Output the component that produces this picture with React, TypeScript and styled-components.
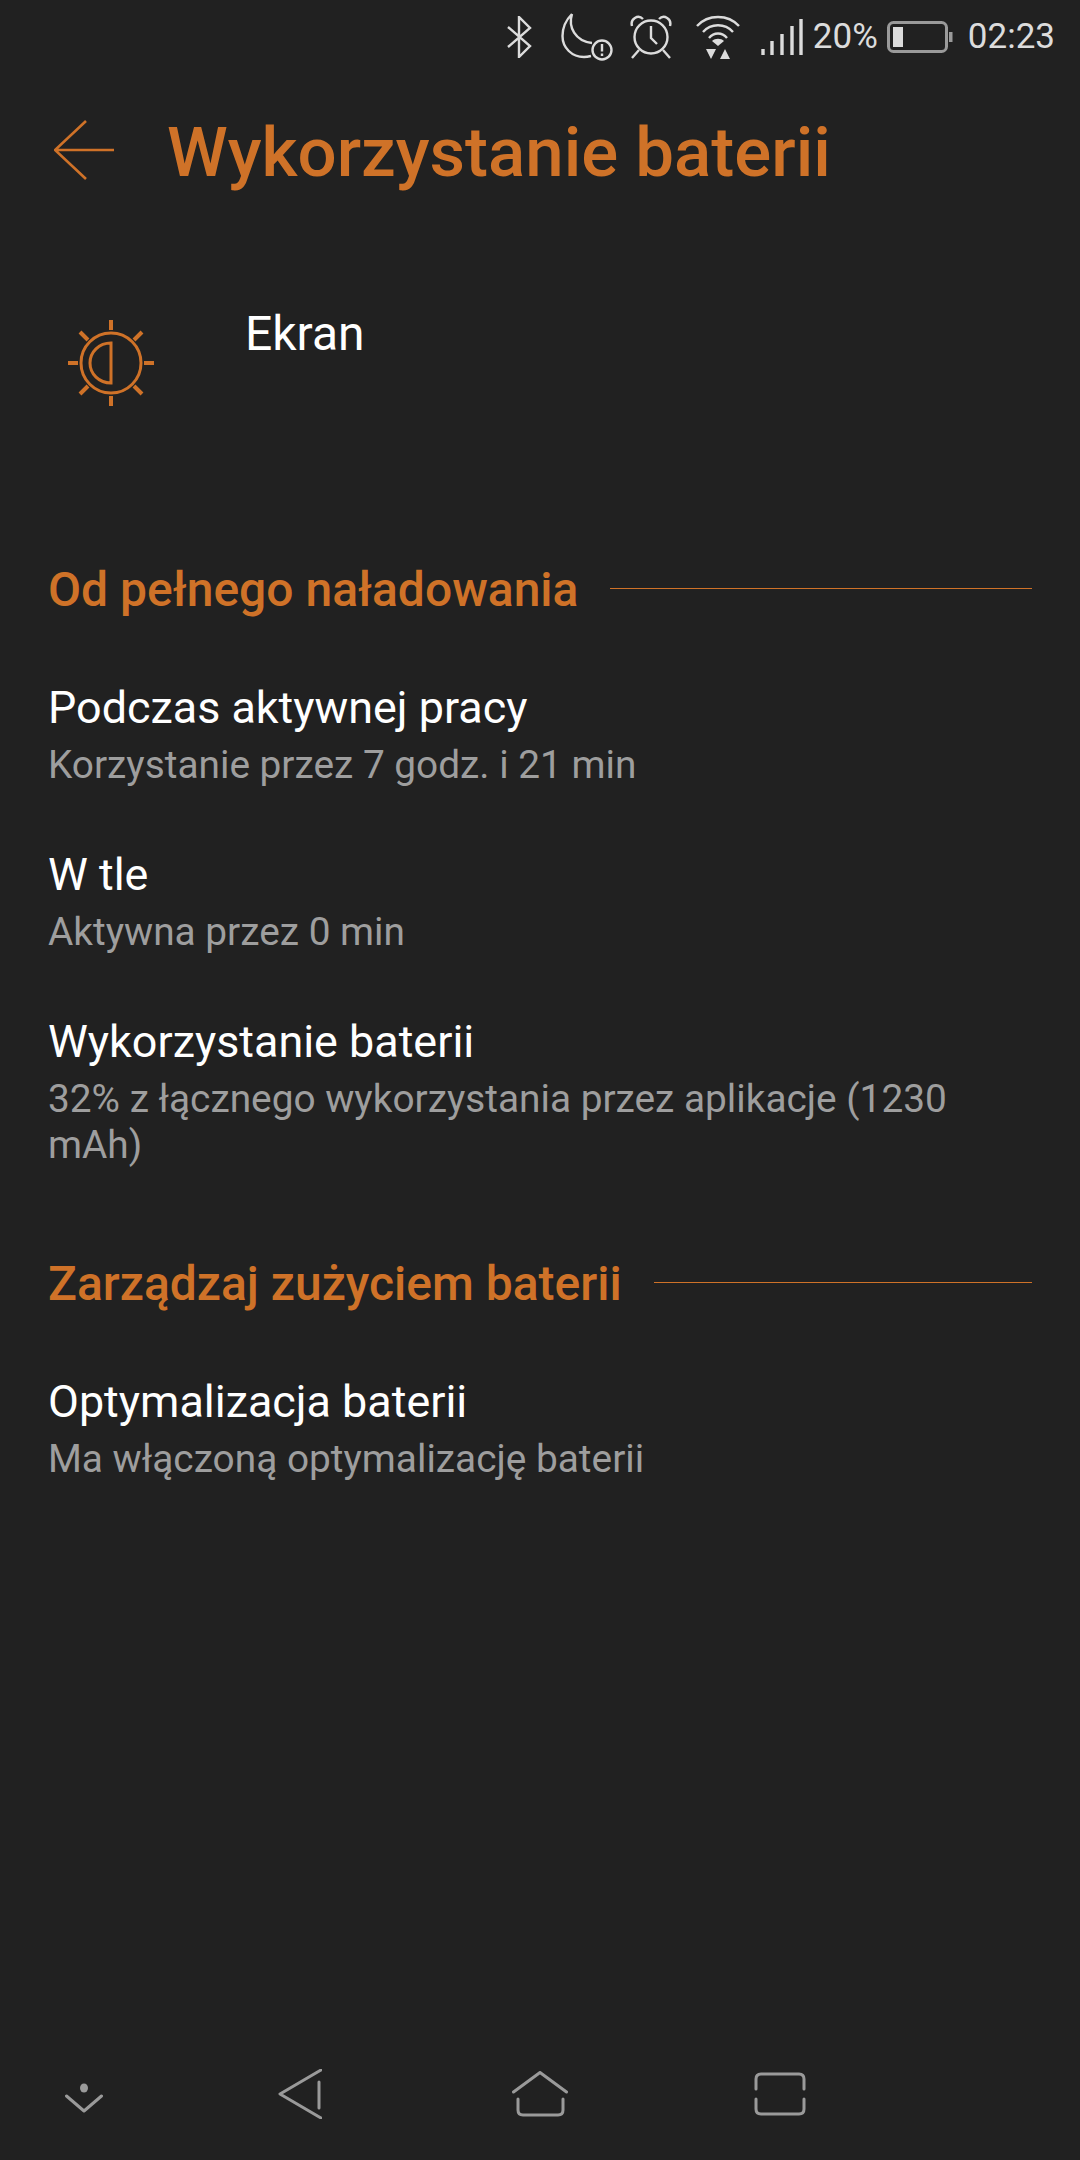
import styled, { createGlobalStyle } from 'styled-components'

const accent = '#cf7228'
const iconGray = '#9a9a9a'
const statusGray = '#dcdcdc'

const GlobalStyle = createGlobalStyle`
  html, body {
    margin: 0;
    padding: 0;
    background: #212121;
  }
`

const Page = styled.div`
  width: 1080px;
  height: 2160px;
  display: flex;
  flex-direction: column;
  background: #212121;
  font-family: Roboto, 'Noto Sans', sans-serif;
  overflow: hidden;
`

const StatusBar = styled.div`
  height: 74px;
  display: flex;
  align-items: center;
  justify-content: flex-end;
  padding-right: 25px;
  color: ${statusGray};
  font-size: 35px;
`

const StatusIcon = styled.svg<{ $left: number }>`
  display: block;
  flex: none;
  margin-left: ${(p) => p.$left}px;
  fill: none;
  stroke: ${statusGray};
  stroke-width: 2.4;
`

const StatusText = styled.span<{ $left: number }>`
  margin-left: ${(p) => p.$left}px;
  line-height: 40px;
`

const Header = styled.div`
  height: 152px;
  display: flex;
  align-items: center;
  padding-left: 54px;
`

const BackIcon = styled.svg`
  display: block;
  flex: none;
  stroke: ${accent};
  stroke-width: 2.6;
  fill: none;
`

const Title = styled.h1`
  margin: 4px 0 0 53px;
  font-size: 69px;
  font-weight: 500;
  color: ${accent};
`

const AppRow = styled.div`
  height: 192px;
  display: flex;
  align-items: flex-start;
  padding-left: 67px;
`

const AppName = styled.div`
  margin: 79px 0 0 90px;
  font-size: 48px;
  color: #fff;
`

const SunIcon = styled.svg`
  display: block;
  flex: none;
  margin-top: 93px;
  stroke: ${accent};
  fill: none;
`

const Section = styled.section`
  display: flex;
  flex-direction: column;
  padding: 0 48px;
`

const SectionHead = styled.div<{ $top: number }>`
  display: flex;
  align-items: center;
  gap: 32px;
  margin-top: ${(p) => p.$top}px;
  margin-bottom: 31px;
  height: 60px;
`

const SectionTitle = styled.h2`
  margin: 2px 0 0;
  font-size: 48px;
  font-weight: 500;
  color: ${accent};
  white-space: nowrap;
`

const SectionRule = styled.div`
  flex: 1;
  height: 1px;
  background: ${accent};
`

const Item = styled.div`
  display: flex;
  flex-direction: column;
  padding-top: 30px;
  padding-bottom: 28px;
`

const ItemTitle = styled.div`
  font-size: 44.9px;
  line-height: 58px;
  color: #fff;
`

const ItemSub = styled.div`
  font-size: 38.8px;
  line-height: 46px;
  margin-top: 5px;
  color: #9e9e9e;
`

const NavBar = styled.nav`
  margin-top: auto;
  height: 91px;
  display: flex;
  align-items: flex-start;
  padding-left: 65px;
`

const NavIcon = styled.svg<{ $left?: number; $top?: number }>`
  display: block;
  flex: none;
  margin-left: ${(p) => p.$left ?? 0}px;
  margin-top: ${(p) => p.$top ?? 0}px;
  stroke: ${iconGray};
  stroke-width: 3;
  stroke-linecap: round;
  stroke-linejoin: round;
  fill: none;
`

export default function App() {
  return (
    <Page>
      <GlobalStyle />
      <StatusBar>
        <StatusIcon $left={0} width="26" height="42" viewBox="0 0 26 42">
          <path d="M2 11 L24 30 L13 41 V1 L24 12 L2 31" />
        </StatusIcon>
        <StatusIcon $left={29} width="52" height="48" viewBox="0 0 52 48">
          <path d="M11 1 C4 8 1.5 15 1.5 23 C1.5 35 11 44 23 44 C26 44 28 43.5 30 43 M11 1 C7 14 14 28 31 30" />
          <circle cx="41" cy="37" r="9.5" />
          <path d="M41 31 V38.5 M41 40.5 V43" />
        </StatusIcon>
        <StatusIcon $left={17} width="42" height="44" viewBox="0 0 42 44">
          <circle cx="21" cy="22" r="16.5" />
          <path d="M21 11 V23 L27 29 M2 11 C0 4 8 -1 13 4 M40 11 C42 4 34 -1 29 4 M9 35 L2 43 M33 35 L40 43" />
        </StatusIcon>
        <StatusIcon $left={24} width="44" height="44" viewBox="0 0 44 44">
          <path d="M1 11 C12 -1 32 -1 43 11 M7 17 C15 8 29 8 37 17 M13 23 C18 17 26 17 31 23" />
          <path d="M16 26 C19 23 25 23 28 26 L22 31 Z" fill={statusGray} stroke="none" />
          <path d="M10 34 H20 L15 44 Z M24 44 L29 34 L34 44 Z" fill={statusGray} stroke="none" />
        </StatusIcon>
        <StatusIcon $left={21} width="42" height="36" viewBox="0 0 42 36">
          <path d="M2 36 V30 M11 36 V22 M21 36 V15 M31 36 V7 M40 36 V0" strokeWidth="3.4" />
        </StatusIcon>
        <StatusText $left={10}>20%</StatusText>
        <StatusIcon $left={9} width="66" height="32" viewBox="0 0 66 32">
          <rect x="1.5" y="1.5" width="58" height="29" rx="5" stroke="#9a9a9a" strokeWidth="3" />
          <rect x="6" y="6" width="10" height="20" fill={statusGray} stroke="none" />
          <rect x="62" y="11" width="3.5" height="10" fill="#9a9a9a" stroke="none" />
        </StatusIcon>
        <StatusText $left={15}>02:23</StatusText>
      </StatusBar>

      <Header>
        <BackIcon width="60" height="60" viewBox="0 0 60 60">
          <path d="M32 1 L1 30 L32 59 M1 30 H60" />
        </BackIcon>
        <Title>Wykorzystanie baterii</Title>
      </Header>

      <AppRow>
        <SunIcon width="88" height="88" viewBox="0 0 88 88">
          <circle cx="44" cy="44" r="30" strokeWidth="3" />
          <path d="M44 24 C32 24 23 33 23 44 C23 55 32 64 44 64 Z" strokeWidth="3" />
          <path
            d="M44 1 V11 M44 77 V87 M1 44 H11 M77 44 H87 M13 13 L21 21 M75 13 L67 21 M13 75 L21 67 M75 75 L67 67"
            strokeWidth="4"
          />
        </SunIcon>
        <AppName>Ekran</AppName>
      </AppRow>

      <Section>
        <SectionHead $top={140}>
          <SectionTitle>Od pełnego naładowania</SectionTitle>
          <SectionRule />
        </SectionHead>
        <Item>
          <ItemTitle>Podczas aktywnej pracy</ItemTitle>
          <ItemSub>Korzystanie przez 7 godz. i 21 min</ItemSub>
        </Item>
        <Item>
          <ItemTitle>W tle</ItemTitle>
          <ItemSub>Aktywna przez 0 min</ItemSub>
        </Item>
        <Item>
          <ItemTitle>Wykorzystanie baterii</ItemTitle>
          <ItemSub>32% z łącznego wykorzystania przez aplikacje (1230 mAh)</ItemSub>
        </Item>
        <SectionHead $top={56}>
          <SectionTitle>Zarządzaj zużyciem baterii</SectionTitle>
          <SectionRule />
        </SectionHead>
        <Item>
          <ItemTitle>Optymalizacja baterii</ItemTitle>
          <ItemSub>Ma włączoną optymalizację baterii</ItemSub>
        </Item>
      </Section>

      <NavBar>
        <NavIcon $top={14} width="38" height="30" viewBox="0 0 38 30">
          <ellipse cx="19" cy="5" rx="4" ry="4.5" fill={iconGray} stroke="none" />
          <path d="M1.5 13 L19 28 L36.5 13" />
        </NavIcon>
        <NavIcon $left={175} width="44" height="50" viewBox="0 0 44 50">
          <path d="M43 1 L2 25 L43 49 M41 13 V39" />
        </NavIcon>
        <NavIcon $left={190} $top={2} width="56" height="46" viewBox="0 0 56 46">
          <path d="M1.5 21 L28 1.5 L54.5 21 M6 28 V39 Q6 44 11 44 H46 Q51 44 51 39 V28" />
        </NavIcon>
        <NavIcon $left={186} $top={3} width="52" height="44" viewBox="0 0 52 44">
          <path d="M2 17 V7 Q2 2 7 2 H45 Q50 2 50 7 V17 M2 27 V37 Q2 42 7 42 H45 Q50 42 50 37 V27" />
        </NavIcon>
      </NavBar>
    </Page>
  )
}
